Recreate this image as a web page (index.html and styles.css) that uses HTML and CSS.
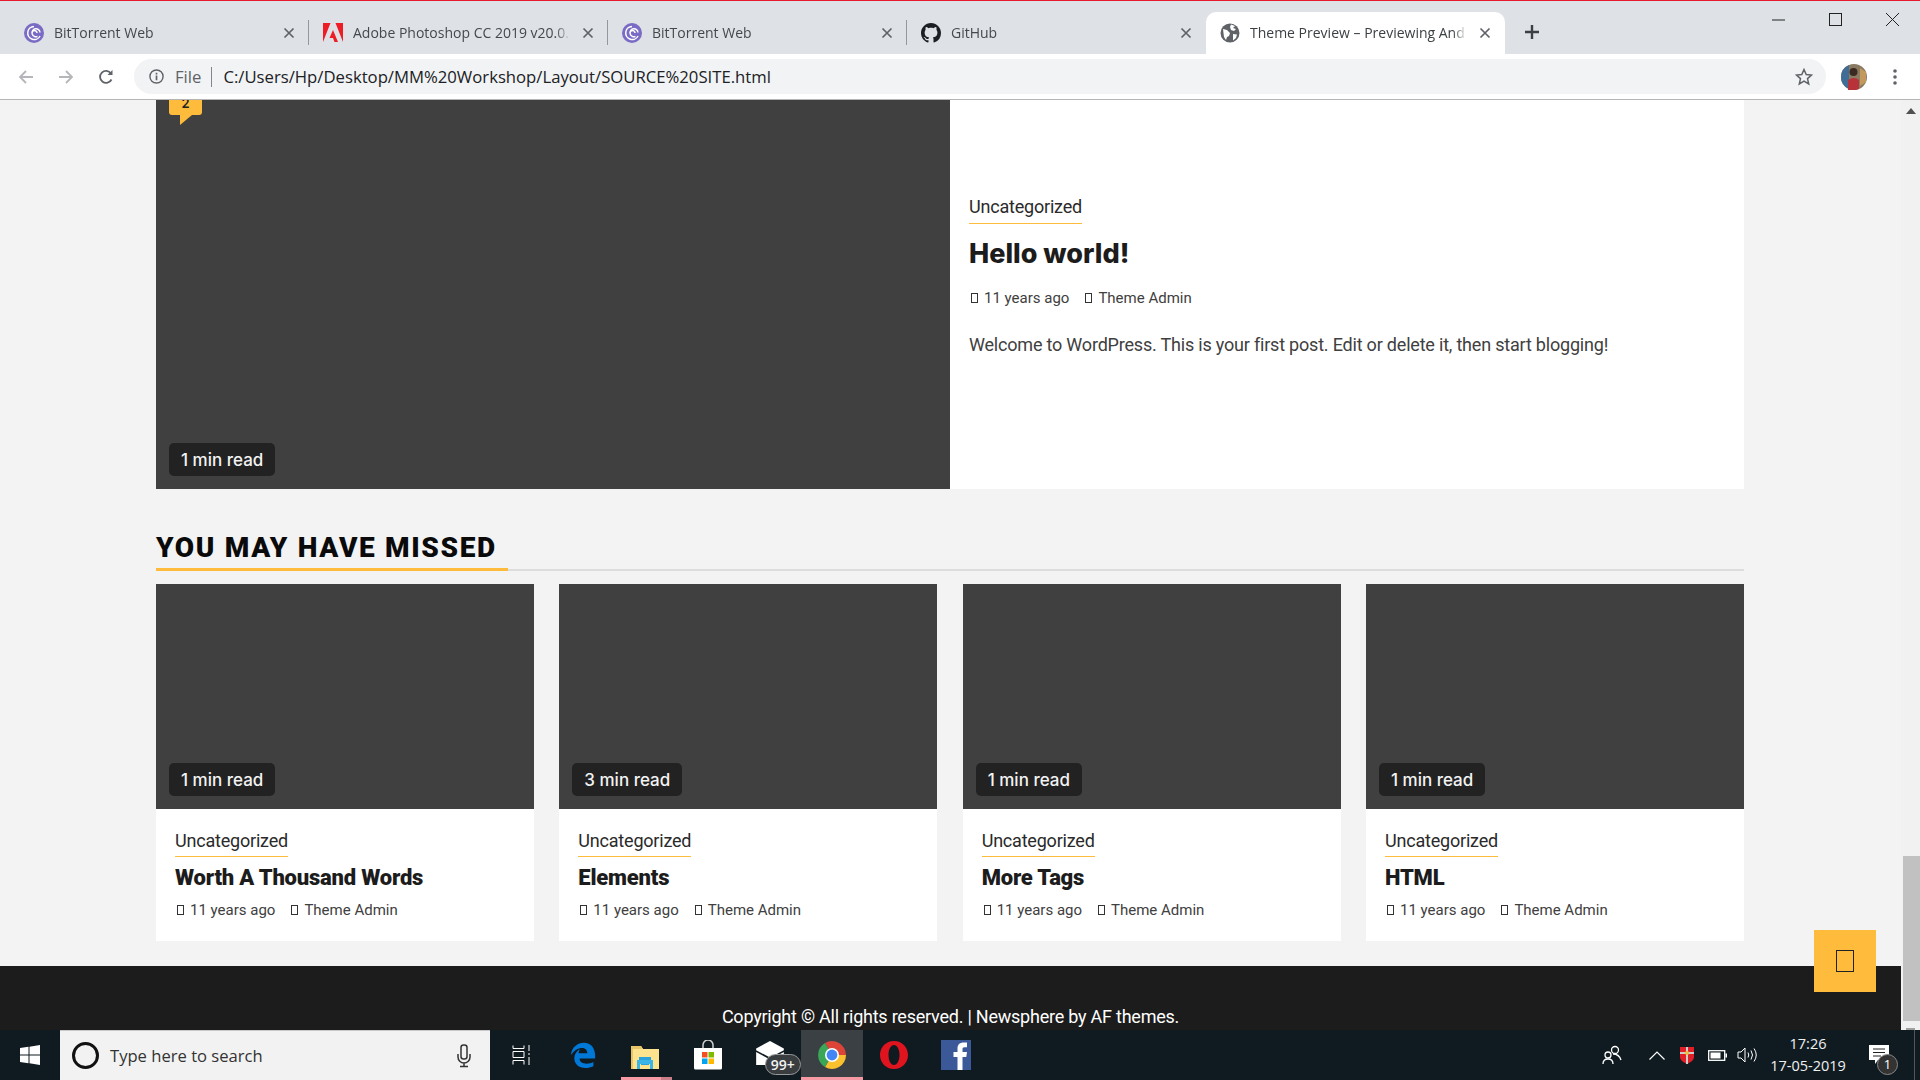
FILE: index.html
```html
<!DOCTYPE html>
<html lang="en">
<head>
  <meta charset="UTF-8">
  <title>Theme Preview</title>
  <link rel="stylesheet" href="styles.css">
</head>
<body>
  <svg class="defs" width="0" height="0">
    <symbol id="i-bt" viewBox="0 0 20 20">
      <circle cx="10" cy="10" r="10" fill="#7a6bc4"/>
      <path d="M16 13a6.500 6.500 0 1 1-6-9.500M16 9.500a4 4 0 1 0-2.500 4M8 10a2.500 2.500 0 0 1 5 0" fill="none" stroke="#fff" stroke-width="1.500"/>
    </symbol>
    <symbol id="i-x" viewBox="0 0 12 12">
      <path d="M1.500 1.500l9 9M10.500 1.500l-9 9" stroke="#5f6368" stroke-width="1.700" fill="none"/>
    </symbol>
  </svg>

  <div class="tabbar">
    <div class="tab">
      <svg class="favicon"><use href="#i-bt"/></svg>
      <span class="tab-title">BitTorrent Web</span>
      <svg class="tab-x"><use href="#i-x"/></svg>
    </div>
    <div class="tab">
      <svg class="favicon" viewBox="0 0 20 20"><path d="M0 0h7.500L0 19zM12.500 0H20v19zM10 7l5 12h-3.500l-1.500-4H6.500z" fill="#ee1c25"/></svg>
      <span class="tab-title">Adobe Photoshop CC 2019 v20.0.</span>
      <svg class="tab-x"><use href="#i-x"/></svg>
    </div>
    <div class="tab">
      <svg class="favicon"><use href="#i-bt"/></svg>
      <span class="tab-title">BitTorrent Web</span>
      <svg class="tab-x"><use href="#i-x"/></svg>
    </div>
    <div class="tab tab-last">
      <svg class="favicon" viewBox="0 0 16 16"><path fill="#1b1f23" d="M8 0C3.580 0 0 3.580 0 8c0 3.540 2.290 6.530 5.470 7.590.4.070.55-.17.55-.38 0-.19-.01-.82-.01-1.490-2.010.37-2.530-.49-2.690-.94-.09-.23-.48-.94-.82-1.130-.28-.15-.68-.52-.01-.53.63-.01 1.080.58 1.230.82.72 1.210 1.870.87 2.330.66.07-.52.28-.87.51-1.070-1.780-.2-3.640-.89-3.640-3.950 0-.87.31-1.590.82-2.150-.08-.2-.36-1.020.08-2.120 0 0 .67-.21 2.200.82.64-.18 1.320-.27 2-.27.68 0 1.360.09 2 .27 1.530-1.040 2.200-.82 2.200-.82.44 1.100.16 1.920.08 2.120.51.56.82 1.270.82 2.150 0 3.070-1.870 3.750-3.650 3.950.29.25.54.73.54 1.480 0 1.070-.01 1.930-.01 2.200 0 .21.15.46.55.38A8.013 8.013 0 0 0 16 8c0-4.420-3.580-8-8-8z"/></svg>
      <span class="tab-title">GitHub</span>
      <svg class="tab-x"><use href="#i-x"/></svg>
    </div>
    <div class="tab tab-active">
      <svg class="favicon" viewBox="0 0 20 20"><circle cx="10" cy="10" r="9.500" fill="#5f6368"/><path d="M3 6l4 1 3 3-1 3-2 1-1 3-2-3zM11 1.500l4 1.500-2 2 3 1-2 2-3-1-1-3zM13 11l4 .5-1 3.500-3 2.500z" fill="#fff"/></svg>
      <span class="tab-title">Theme Preview – Previewing And</span>
      <svg class="tab-x"><use href="#i-x"/></svg>
    </div>
    <svg class="new-tab" viewBox="0 0 14 14"><path d="M7 0v14M0 7h14" stroke="#3c4043" stroke-width="2.400"/></svg>
    <div class="win-controls">
      <svg viewBox="0 0 13 13"><path d="M0 7h13" stroke="#222" stroke-width="1"/></svg>
      <svg viewBox="0 0 13 13"><rect x=".5" y=".5" width="12" height="12" fill="none" stroke="#222"/></svg>
      <svg viewBox="0 0 13 13"><path d="M0 0l13 13M13 0L0 13" stroke="#222" stroke-width="1"/></svg>
    </div>
  </div>

  <div class="toolbar">
    <svg class="nav-icon" viewBox="0 0 16 16"><path d="M15 8H2M8 2L2 8l6 6" fill="none" stroke="#b4b6b9" stroke-width="1.800"/></svg>
    <svg class="nav-icon" viewBox="0 0 16 16"><path d="M1 8h13M8 2l6 6-6 6" fill="none" stroke="#b4b6b9" stroke-width="1.800"/></svg>
    <svg class="nav-icon" viewBox="0 0 16 16"><path d="M13.500 10.500A6 6 0 1 1 13 4.500" fill="none" stroke="#5f6368" stroke-width="1.800"/><path d="M14.500 1v5h-5z" fill="#5f6368"/></svg>
    <div class="omnibox">
      <svg class="info" viewBox="0 0 16 16"><circle cx="8" cy="8" r="7" fill="none" stroke="#5f6368" stroke-width="1.500"/><path d="M8 7v5M8 4v1.800" stroke="#5f6368" stroke-width="1.800"/></svg>
      <span class="omni-scheme">File</span>
      <span class="omni-sep"></span>
      <span class="omni-url">C:/Users/Hp/Desktop/MM%20Workshop/Layout/SOURCE%20SITE.html</span>
      <svg class="star" viewBox="0 0 18 18"><path d="M9 1.500l2.200 5 5.300.5-4 3.600 1.200 5.300L9 13.100l-4.700 2.800 1.200-5.300-4-3.600 5.300-.5z" fill="none" stroke="#5f6368" stroke-width="1.500"/></svg>
    </div>
    <svg class="avatar" viewBox="0 0 26 26">
      <circle cx="13" cy="13" r="13" fill="#8a7a62"/>
      <path d="M0 13a13 13 0 0 1 8-12v24a13 13 0 0 1-8-12z" fill="#3f6d96"/>
      <path d="M19 4l6 4v10l-6 4z" fill="#c29a5e"/>
      <circle cx="12.500" cy="8" r="4" fill="#3a2a22"/>
      <path d="M7 26v-10q6-4 11 0v9q-5 2-11 1z" fill="#b8323a"/>
    </svg>
    <svg class="kebab" viewBox="0 0 4 18"><circle cx="2" cy="3" r="1.800" fill="#5f6368"/><circle cx="2" cy="9" r="1.800" fill="#5f6368"/><circle cx="2" cy="15" r="1.800" fill="#5f6368"/></svg>
  </div>

  <div class="viewport">
    <div class="page">
      <div class="container">
        <div class="hero">
          <div class="hero-img">
            <span class="comments">2</span>
            <span class="read-time">1 min read</span>
          </div>
          <div class="hero-body">
            <a class="cat">Uncategorized</a>
            <h1 class="hero-title">Hello world!</h1>
            <div class="meta hero-meta"><i></i><span>11 years ago</span><i></i><span>Theme Admin</span></div>
            <p class="excerpt">Welcome to WordPress. This is your first post. Edit or delete it, then start blogging!</p>
          </div>
        </div>

        <div class="section-head"><h2>YOU MAY HAVE MISSED</h2></div>

        <div class="cards">
          <div class="card">
            <div class="card-img"><span class="read-time">1 min read</span></div>
            <div class="card-body">
              <a class="cat">Uncategorized</a>
              <h3>Worth A Thousand Words</h3>
              <div class="meta"><i></i><span>11 years ago</span><i></i><span>Theme Admin</span></div>
            </div>
          </div>
          <div class="card">
            <div class="card-img"><span class="read-time">3 min read</span></div>
            <div class="card-body">
              <a class="cat">Uncategorized</a>
              <h3>Elements</h3>
              <div class="meta"><i></i><span>11 years ago</span><i></i><span>Theme Admin</span></div>
            </div>
          </div>
          <div class="card">
            <div class="card-img"><span class="read-time">1 min read</span></div>
            <div class="card-body">
              <a class="cat">Uncategorized</a>
              <h3>More Tags</h3>
              <div class="meta"><i></i><span>11 years ago</span><i></i><span>Theme Admin</span></div>
            </div>
          </div>
          <div class="card">
            <div class="card-img"><span class="read-time">1 min read</span></div>
            <div class="card-body">
              <a class="cat">Uncategorized</a>
              <h3>HTML</h3>
              <div class="meta"><i></i><span>11 years ago</span><i></i><span>Theme Admin</span></div>
            </div>
          </div>
        </div>
      </div>

      <div class="footer">Copyright © All rights reserved. | Newsphere by AF themes.</div>
    </div>

    <div class="scrollbar">
      <span class="sb-up"></span>
      <span class="sb-thumb"></span>
      <span class="sb-down"></span>
    </div>

    <div class="to-top"><i></i></div>
  </div>

  <div class="taskbar">
    <div class="start">
      <svg viewBox="0 0 20 20"><path d="M0 3l8.500-1.200v7.700H0zM9.500 1.700L20 0v9.500H9.500zM0 10.500h8.500v7.700L0 17zM9.500 10.500H20V20L9.500 18.300z" fill="#fff"/></svg>
    </div>
    <div class="search">
      <span class="cortana"></span>
      <span class="search-text">Type here to search</span>
      <svg class="mic" viewBox="0 0 16 24"><rect x="5" y="1" width="6" height="14" rx="2.500" fill="none" stroke="#333" stroke-width="1.500"/><path d="M2 10v3a6 6 0 0 0 12 0v-3M8 19v3M4 22.500h8" fill="none" stroke="#333" stroke-width="1.500"/></svg>
    </div>

    <div class="tile">
      <svg width="20" height="20" viewBox="0 0 20 20"><path d="M2 .5v3h11v-3M2 6.500h11v6H2zM2 19.500v-4h11v4M18 0v6M18 8v2M18 12v8" fill="none" stroke="#fff" stroke-width="1"/></svg>
    </div>
    <div class="tile">
      <svg width="26" height="26" viewBox="0 0 30 30"><path d="M1 15C2 6 9 1 16 1c8 0 13 6 13 15v3H11c0 4 4 6 8 6 3 0 6-1 8-2v5c-3 1.500-6 2-9 2-8 0-13-5-13-11 0-5 3-9 7-11-2 2-2 4-2 5h10c0-3-2-6-6-6-5 0-9 3-13 8z" fill="#0078d7"/></svg>
    </div>
    <div class="tile tile-open">
      <svg width="28" height="24" viewBox="0 0 28 24"><path d="M0 1h10l2 3h16v20H0z" fill="#fde38d"/><path d="M0 1h10l2 3H2v20H0z" fill="#e8c56a"/><path d="M8 12h12v3h-2v5h-8v-5H8z" fill="#2aa3dc"/><path d="M6 15h16v9h-3v-5H9v5H6z" fill="#3bb4e8"/></svg>
    </div>
    <div class="tile">
      <svg width="30" height="30" viewBox="0 0 30 30"><path d="M10 8V5a5 5 0 0 1 10 0v3" fill="none" stroke="#d0d0d0" stroke-width="1.500"/><path d="M1 8h28v20a1.500 1.500 0 0 1-1.500 1.500h-25A1.500 1.500 0 0 1 1 28z" fill="#fff"/><path d="M9 12h5.500v5.500H9z" fill="#f25022"/><path d="M15.500 12H21v5.500h-5.500z" fill="#7fba00"/><path d="M9 18.500h5.500V24H9z" fill="#00a4ef"/><path d="M15.500 18.500H21V24h-5.500z" fill="#ffb900"/></svg>
    </div>
    <div class="tile mail">
      <svg width="30" height="24" viewBox="0 0 30 26"><path d="M0 8L15 0l15 8v2L15 18 0 10z" fill="#fff"/><path d="M0 12l15 8 15-8v14H0z" fill="#fff"/></svg>
      <span class="mail-count">99+</span>
    </div>
    <div class="tile tile-active">
      <svg width="28" height="28" viewBox="0 0 28 28">
        <path d="M14 14L7 1.900A14 14 0 0 1 28 14z" fill="#db4437"/>
        <path d="M14 14h14A14 14 0 0 1 7 26.100z" fill="#fbc02d"/>
        <path d="M14 14L7 26.100A14 14 0 0 1 7 1.900z" fill="#3aa757"/>
        <circle cx="14" cy="14" r="7" fill="#fff"/>
        <circle cx="14" cy="14" r="5.400" fill="#4285f4"/>
      </svg>
    </div>
    <div class="tile">
      <svg width="30" height="30" viewBox="0 0 30 30"><path fill-rule="evenodd" d="M15 1c8 0 14 6.300 14 14s-6 14-14 14S1 22.700 1 15 7 1 15 1zm0 4c-3.300 0-5.500 4.500-5.500 10s2.200 10 5.500 10 5.500-4.500 5.500-10S18.300 5 15 5z" fill="#e0141f"/></svg>
    </div>
    <div class="tile">
      <svg width="30" height="30" viewBox="0 0 30 30"><rect width="30" height="30" fill="#3b5998"/><path d="M16.500 30V17h-4v-5h4V8.500c0-4 2.400-6 6-6H26v4.700h-2.500c-1.700 0-2 .8-2 2.200V12H26l-.7 5h-3.800v13z" fill="#fff"/></svg>
    </div>

    <div class="tray">
      <svg class="tray-people" viewBox="0 0 20 20"><circle cx="13" cy="5" r="3.500" fill="none" stroke="#fff" stroke-width="1.300"/><circle cx="6" cy="10" r="3" fill="none" stroke="#fff" stroke-width="1.300"/><path d="M1 19c0-3 2-5 5-5s5 2 5 5M11 9c4 0 7 3 8 6" fill="none" stroke="#fff" stroke-width="1.300"/></svg>
      <svg class="tray-chevron" viewBox="0 0 16 9"><path d="M.5 8.500L8 1l7.500 7.500" fill="none" stroke="#fff" stroke-width="1.200"/></svg>
      <svg class="tray-shield" viewBox="0 0 14 18"><path d="M0 1h14v10c0 3-3 5-7 7-4-2-7-4-7-7z" fill="#e21f26"/><path d="M6 1h2v17H6zM0 6h14v2H0z" fill="#ccc"/><circle cx="7" cy="7" r="2" fill="#f0c030"/></svg>
      <svg class="tray-battery" viewBox="0 0 19 11"><rect x=".7" y=".7" width="16" height="9.600" fill="none" stroke="#fff" stroke-width="1.300"/><rect x="2.500" y="2.500" width="10" height="6" fill="#fff"/><rect x="17.500" y="3.500" width="1.500" height="4" fill="#fff"/></svg>
      <svg class="tray-volume" viewBox="0 0 20 16"><path d="M1 5h3l4-4v14l-4-4H1z" fill="none" stroke="#fff" stroke-width="1"/><path d="M11 5.500q1.500 2.500 0 5M14 3.500q3 4.500 0 9M17 1.500q4.500 6.500 0 13" fill="none" stroke="#fff" stroke-width="1"/></svg>
      <div class="clock"><span>17:26</span><span>17-05-2019</span></div>
      <div class="notif">
        <svg viewBox="0 0 20 20"><path d="M0 0h20v15H9l-3 4v-4H0z" fill="#fff"/><path d="M4 4h12M4 7.500h12M4 11h8" stroke="#222" stroke-width="1"/></svg>
        <span class="notif-count">1</span>
      </div>
    </div>
    <span class="sb-ghost"></span>
  </div>
</body>
</html>
```

FILE: styles.css
```css
html, body{
  margin: 0;
  padding: 0;
  height: 100%;
  overflow: hidden;
}

body{
  display: flex;
  flex-direction: column;
  width: 1920px;
  height: 1080px;
  font-family: "Roboto", "Liberation Sans", sans-serif;
  background: #f3f3f3;
}

.defs{
  position: absolute;
}

/* tab strip */
.tabbar{
  display: flex;
  flex: none;
  align-items: flex-end;
  height: 54px;
  box-sizing: border-box;
  border-top: 1px solid #e8192c;
  background: #dee1e6;
  padding-left: 10px;
}

.tab{
  position: relative;
  display: flex;
  align-items: center;
  box-sizing: border-box;
  width: 299px;
  height: 42px;
  padding: 0 14px;
  color: #45484c;
  font-family: "Open Sans", "Liberation Sans", sans-serif;
  font-size: 14px;
}
.tab::after{
  content: '';
  position: absolute;
  right: 0;
  top: 8px;
  width: 1px;
  height: 25px;
  background: #94979c;
}
.tab-last::after{
  display: none;
}
.tab-active{
  background: #fff;
  border-radius: 10px 10px 0 0;
  color: #3c4043;
}
.tab-active::after{
  display: none;
}

.favicon{
  flex: none;
  width: 20px;
  height: 20px;
  margin-right: 10px;
}
.tab-title{
  flex: 1;
  margin-top: -2px;
  overflow: hidden;
  white-space: nowrap;
  -webkit-mask-image: linear-gradient(to left, transparent 0, #000 14px);
  mask-image: linear-gradient(to left, transparent 0, #000 14px);
}
.tab-x{
  flex: none;
  width: 12px;
  height: 12px;
  margin-left: 12px;
}

.new-tab{
  width: 14px;
  height: 14px;
  margin: 0 0 15px 20px;
}

.win-controls{
  display: flex;
  gap: 44px;
  margin-left: auto;
  align-self: flex-start;
  padding: 12px 21px 0 0;
}
.win-controls svg{
  width: 13px;
  height: 13px;
}

/* address bar */
.toolbar{
  display: flex;
  flex: none;
  align-items: center;
  height: 46px;
  box-sizing: border-box;
  border-bottom: 1px solid #b5b5b5;
  background: #fff;
  padding-left: 18px;
}
.nav-icon{
  width: 16px;
  height: 16px;
  margin-right: 24px;
}
.omnibox{
  display: flex;
  align-items: center;
  flex: none;
  box-sizing: border-box;
  width: 1692px;
  height: 35px;
  margin-left: -4px;
  padding: 0 13px 0 15px;
  border-radius: 18px;
  background: #f1f3f4;
  color: #202124;
  font-family: "Open Sans", "Liberation Sans", sans-serif;
  font-size: 16.700px;
}
.info{
  width: 15px;
  height: 15px;
  margin-right: 11px;
}
.omni-scheme{
  color: #5f6368;
}
.omni-sep{
  width: 1px;
  height: 20px;
  margin: 0 11px 0 10px;
  background: #80868b;
}
.omni-url{
  white-space: nowrap;
}
.star{
  width: 18px;
  height: 18px;
  margin-left: auto;
}
.avatar{
  width: 26px;
  height: 26px;
  margin-left: 15px;
}
.kebab{
  width: 4px;
  height: 18px;
  margin-left: 26px;
}

/* browser viewport */
.viewport{
  position: relative;
  display: flex;
  flex: 1;
  min-height: 0;
  overflow: hidden;
}
.page{
  flex: 1;
  min-width: 0;
  background: #f3f3f3;
  overflow: hidden;
}
.container{
  padding: 0 157px 0 156px;
}

.hero{
  display: flex;
  height: 389px;
  background: #fff;
}
.hero-img{
  position: relative;
  flex: none;
  width: 794px;
  background: #404040;
}
.hero-body{
  flex: 1;
  padding: 95px 19px 0;
}
.hero-body .cat{
  padding-bottom: 4px;
}

.comments{
  position: absolute;
  left: 13px;
  top: -9px;
  width: 33px;
  height: 24px;
  border-radius: 0 0 3px 3px;
  background: #ffbb3b;
  color: #222;
  font-family: "Inter", sans-serif;
  font-weight: 600;
  font-size: 13px;
  line-height: 24px;
  text-align: center;
}
.comments::after{
  content: '';
  position: absolute;
  left: 11px;
  top: 24px;
  border-top: 10px solid #ffbb3b;
  border-right: 12px solid transparent;
}

.read-time{
  position: absolute;
  left: 13px;
  bottom: 13px;
  padding: 0 12px;
  height: 33px;
  border-radius: 5px;
  background: #222;
  color: #f3f3f3;
  font-family: "Inter", sans-serif;
  font-weight: 500;
  font-size: 17px;
  line-height: 35px;
  white-space: nowrap;
}

.cat{
  display: inline-block;
  padding-bottom: 3px;
  border-bottom: 1px solid #ffbb3b;
  color: #2a2a2a;
  font-size: 18px;
  line-height: 24px;
  letter-spacing: -0.2px;
}

.hero-title{
  margin: 12px 0 0;
  color: #1c1c1c;
  font-family: "Inter", sans-serif;
  font-weight: 800;
  font-size: 27px;
  line-height: 36px;
}
.meta{
  display: flex;
  align-items: center;
  height: 20px;
  margin-top: 7px;
  padding-left: 2px;
  color: #404040;
  font-size: 15px;
  line-height: 20px;
}
.meta i{
  flex: none;
  box-sizing: border-box;
  width: 7px;
  height: 10px;
  margin-right: 6px;
  border: 1px solid #333;
}
.meta span{
  margin-right: 16px;
}
.hero-meta{
  margin-top: 16px;
}
.excerpt{
  margin: 25px 0 0;
  color: #404040;
  font-size: 18px;
  line-height: 24px;
  letter-spacing: -0.2px;
}

.section-head{
  display: flex;
  margin-top: 40px;
  border-bottom: 2px solid #ddd;
}
.section-head h2{
  box-sizing: border-box;
  width: 352px;
  height: 42px;
  margin: 0 0 -2px;
  border-bottom: 3px solid #ffbb3b;
  color: #0a0a0a;
  font-family: "Roboto", sans-serif;
  font-weight: 900;
  font-size: 28px;
  line-height: 38px;
  letter-spacing: 1.650px;
  white-space: nowrap;
}

.cards{
  display: grid;
  grid-template-columns: repeat(4, 1fr);
  column-gap: 25.330px;
  margin-top: 13px;
}
.card{
  background: #fff;
}
.card-img{
  position: relative;
  height: 225px;
  background: #404040;
}
.card-body{
  padding: 20px 19px 21px;
}
.card-body h3{
  margin: 6px 0 0;
  color: #1c1c1c;
  font-family: "Roboto", sans-serif;
  font-weight: 900;
  font-size: 22px;
  line-height: 30px;
  letter-spacing: -0.2px;
  white-space: nowrap;
}

.footer{
  height: 64px;
  box-sizing: border-box;
  margin-top: 25px;
  padding-top: 39px;
  background: #1c1c1c;
  color: #fff;
  font-size: 18px;
  line-height: 24px;
  letter-spacing: -0.23px;
  text-align: center;
}

.scrollbar{
  display: flex;
  flex: none;
  flex-direction: column;
  align-items: center;
  width: 19px;
  background: #f1f1f1;
}
.sb-up{
  margin-top: 8px;
  border: 5px solid transparent;
  border-top: 0;
  border-bottom: 6px solid #505050;
}
.sb-thumb{
  align-self: flex-end;
  width: 17px;
  height: 165px;
  margin-top: auto;
  background: #c1c1c1;
}
.sb-down{
  width: 9px;
  height: 2px;
  margin: 7px 0 0;
  background: #a0a0a0;
}

.to-top{
  position: absolute;
  right: 44px;
  bottom: 38px;
  display: flex;
  align-items: center;
  justify-content: center;
  width: 62px;
  height: 62px;
  background: #ffbb3b;
}
.to-top i{
  box-sizing: border-box;
  width: 18px;
  height: 22px;
  border: 1px solid #222;
}

/* windows taskbar */
.taskbar{
  position: relative;
  display: flex;
  flex: none;
  align-items: stretch;
  height: 50px;
  background: #101b21;
  color: #fff;
}
.start{
  display: flex;
  align-items: center;
  justify-content: center;
  width: 60px;
}
.start svg{
  width: 20px;
  height: 20px;
}
.search{
  display: flex;
  align-items: center;
  box-sizing: border-box;
  width: 430px;
  padding: 0 18px 0 12px;
  border-top: 1px solid #c8c8c8;
  background: #f2f2f2;
  color: #333;
  font-family: "Open Sans", "Liberation Sans", sans-serif;
  font-size: 16.600px;
}
.cortana{
  box-sizing: border-box;
  width: 27px;
  height: 27px;
  margin-right: 11px;
  border: 3px solid #111;
  border-radius: 50%;
}
.search-text{
  flex: 1;
}
.mic{
  width: 16px;
  height: 24px;
}

.tile{
  position: relative;
  display: flex;
  flex: none;
  align-items: center;
  justify-content: center;
  box-sizing: border-box;
  width: 62.200px;
}
.tile-open::after{
  content: '';
  position: absolute;
  left: 7px;
  bottom: 0;
  width: 51px;
  height: 3px;
  background: linear-gradient(to right, #f59aa5 40px, #c97e8a 40px);
}
.tile-active{
  background: #3b4045;
  border-bottom: 3px solid #f59aa5;
}
.tile-open svg,
.tile-active svg{
  margin-top: 3px;
}
.mail svg{
  margin-top: -4px;
}
.mail-count{
  position: absolute;
  left: 26px;
  top: 24px;
  box-sizing: border-box;
  width: 36px;
  height: 21px;
  border: 1px solid #999;
  border-radius: 11px;
  background: #3a3d40;
  color: #f2f2f2;
  font-family: "Open Sans", sans-serif;
  font-weight: 600;
  font-size: 14px;
  line-height: 19px;
  text-align: center;
}

.tray{
  display: flex;
  align-items: center;
  margin-left: auto;
}
.tray-people{
  width: 20px;
  height: 20px;
  margin-right: 27px;
}
.tray-chevron{
  width: 16px;
  height: 9px;
  margin-right: 15px;
}
.tray-shield{
  width: 14px;
  height: 18px;
  margin-right: 13.500px;
}
.tray-battery{
  width: 19px;
  height: 11px;
  margin-right: 10.500px;
}
.tray-volume{
  width: 20px;
  height: 16px;
  margin-right: 9px;
}
.clock{
  display: flex;
  flex-direction: column;
  align-items: center;
  width: 84px;
  font-family: "Open Sans", "Liberation Sans", sans-serif;
  font-size: 14.500px;
  line-height: 22px;
  color: #f0f0f0;
}
.notif{
  position: relative;
  width: 70px;
  height: 50px;
}
.notif svg{
  position: absolute;
  left: 19px;
  top: 15px;
  width: 20px;
  height: 20px;
}
.notif-count{
  position: absolute;
  left: 27px;
  top: 24px;
  box-sizing: border-box;
  width: 21px;
  height: 21px;
  border: 1px solid #888;
  border-radius: 50%;
  background: #333;
  font-family: "Open Sans", sans-serif;
  font-size: 13px;
  line-height: 19px;
  text-align: center;
}
.sb-ghost{
  position: absolute;
  right: 5px;
  top: 0;
  width: 1px;
  height: 50px;
  background: #555;
}
```
